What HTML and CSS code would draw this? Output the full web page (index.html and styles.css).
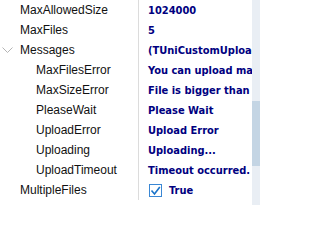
FILE: index.html
```html
<!DOCTYPE html>
<html>
<head>
<meta charset="utf-8">
<link rel="stylesheet" href="styles.css">
</head>
<body>
<div class="inspector">
  <div class="grid">
    <div class="row"><div class="name">MaxAllowedSize</div><div class="val">1024000</div></div>
    <div class="row"><div class="name">MaxFiles</div><div class="val">5</div></div>
    <div class="row"><div class="name"><svg class="chev" width="11" height="6" viewBox="0 0 11 6"><path d="M0.5 0.5 L5.5 5.5 L10.5 0.5" fill="none" stroke="#b4b4b4" stroke-width="1"/></svg>Messages</div><div class="val">(TUniCustomUploadMessages)</div></div>
    <div class="row"><div class="name sub">MaxFilesError</div><div class="val">You can upload maximum files</div></div>
    <div class="row"><div class="name sub">MaxSizeError</div><div class="val">File is bigger than maximum allowed size</div></div>
    <div class="row"><div class="name sub">PleaseWait</div><div class="val">Please Wait</div></div>
    <div class="row"><div class="name sub">UploadError</div><div class="val">Upload Error</div></div>
    <div class="row"><div class="name sub">Uploading</div><div class="val">Uploading...</div></div>
    <div class="row"><div class="name sub">UploadTimeout</div><div class="val">Timeout occurred.</div></div>
    <div class="row"><div class="name">MultipleFiles</div><div class="val check"><span class="box"><svg width="13" height="13" viewBox="0 0 13 13"><path d="M2.5 6.5 L5.5 10 L10.8 3" fill="none" stroke="#1a73c9" stroke-width="1.6"/></svg></span>True</div></div>
  </div>
  <div class="scroll"><div class="thumb"></div></div>
</div>
</body>
</html>
```
FILE: styles.css
```css
html, body { margin: 0; padding: 0; background: #fff; }
.inspector { display: flex; width: 260px; height: 205px; overflow: hidden; }
.grid { width: 252px; overflow: hidden; }
.row { display: flex; height: 20px; align-items: center; }
.name {
  width: 139px; flex: none; box-sizing: border-box; padding-left: 20px;
  border-right: 1px solid #dcdcdc; height: 20px; line-height: 20px;
  font-family: "Liberation Sans", sans-serif; font-size: 12px; color: #111;
  position: relative; white-space: nowrap;
}
.name.sub { padding-left: 36px; }
.chev { position: absolute; left: 2px; top: 7px; }
.val {
  padding-left: 9px; white-space: nowrap; overflow: hidden; min-width: 0; flex: 1;
  font-family: "DejaVu Sans Condensed", "DejaVu Sans", sans-serif; font-weight: bold; font-size: 11px; color: #000080;
}
.check { display: flex; align-items: center; padding-left: 10px; }
.box { width: 13px; height: 13px; box-sizing: border-box; border: 1px solid #3a87d4; margin: 0 7px 0 0; display: flex; flex: none; background: #fff; }
.box svg { margin: -1px; }
.scroll { width: 8px; height: 205px; background: #e9eef4; position: relative; }
.thumb { position: absolute; left: 0; right: 0; top: 101px; height: 65px; background: #c4d5e4; }
```
